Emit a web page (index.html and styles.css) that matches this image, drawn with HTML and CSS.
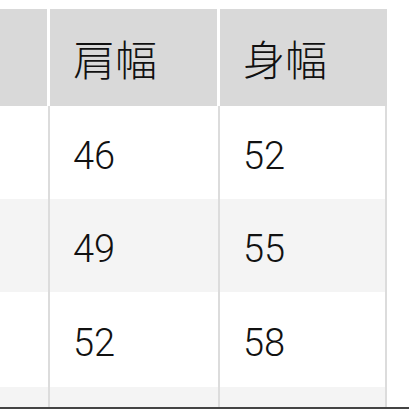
FILE: index.html
```html
<!DOCTYPE html>
<html lang="ja">
<head>
<meta charset="utf-8">
<link rel="stylesheet" href="styles.css">
</head>
<body>
<div class="page">
  <div class="sheet">
    <div class="row head">
      <div class="cell c1"></div>
      <div class="cell c2">肩幅</div>
      <div class="cell c3">身幅</div>
    </div>
    <div class="row body r1">
      <div class="cell c1"></div>
      <div class="cell c2">46</div>
      <div class="cell c3">52</div>
    </div>
    <div class="row body r2 stripe">
      <div class="cell c1"></div>
      <div class="cell c2">49</div>
      <div class="cell c3">55</div>
    </div>
    <div class="row body r3">
      <div class="cell c1"></div>
      <div class="cell c2">52</div>
      <div class="cell c3">58</div>
    </div>
    <div class="row body r4 stripe">
      <div class="cell c1"></div>
      <div class="cell c2"></div>
      <div class="cell c3"></div>
    </div>
  </div>
  <div class="edge"></div>
</div>
</body>
</html>
```

FILE: styles.css
```css
html, body {
  margin: 0;
  padding: 0;
  background: #ffffff;
}
body {
  width: 409px;
  height: 409px;
  overflow: hidden;
  font-family: "Noto Sans CJK JP", "Noto Sans", sans-serif;
  font-weight: 300;
  color: #111111;
}
.page {
  display: flex;
  flex-direction: column;
  height: 409px;
}
.sheet {
  padding-top: 9px;
  width: 387px;
  display: flex;
  flex-direction: column;
  flex: 1;
}
.row {
  display: grid;
  grid-template-columns: 50px 170px 167px;
}
.cell {
  display: flex;
  align-items: center;
  padding-left: 23px;
  line-height: 1;
  box-sizing: border-box;
}
.head {
  height: 97px;
}
.head .cell {
  font-size: 42px;
  background: #d9d9d9;
  border-right: 3px solid #ffffff;
}
.head .c3 {
  border-right: none;
}
.body .cell {
  font-family: "Roboto", "Noto Sans CJK JP", sans-serif;
  font-size: 38px;
  border-right: 2px solid #dcdcdc;
  padding-top: 6px;
}
.r1 { height: 93px; }
.r2 { height: 93px; }
.r3 { height: 95px; }
.r4 { height: 20px; }
.stripe {
  background: #f4f4f4;
}
.edge {
  height: 2px;
  background: #444444;
}
```
